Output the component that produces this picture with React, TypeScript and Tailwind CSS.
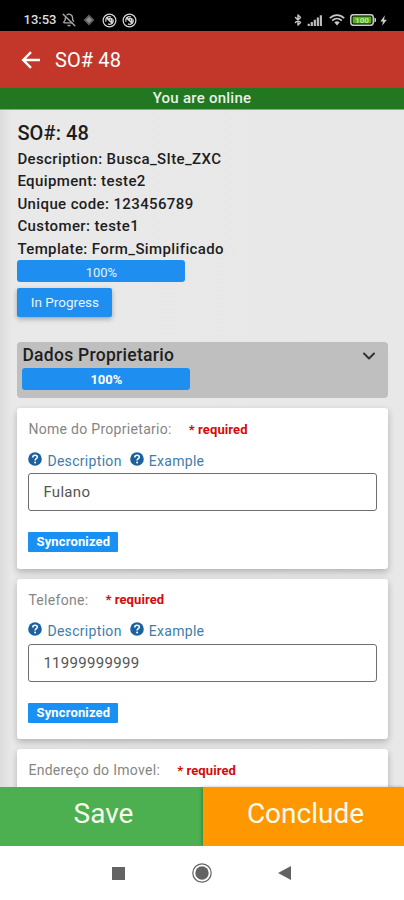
import { useState } from "react";
import { BellOff, Bluetooth, ChevronDown } from "lucide-react";

type Field = {
  id: string;
  label: string;
  value?: string;
};

const details = [
  "Description: Busca_SIte_ZXC",
  "Equipment: teste2",
  "Unique code: 123456789",
  "Customer: teste1",
  "Template: Form_Simplificado",
];

const initialFields: Field[] = [
  { id: "nome", label: "Nome do Proprietario:", value: "Fulano" },
  { id: "telefone", label: "Telefone:", value: "11999999999" },
  { id: "endereco", label: "Endereço do Imovel:" },
];

function AppBadgeIcon() {
  return (
    <svg viewBox="0 0 16 16" className="size-[15px]" fill="none" stroke="#d6d6d6">
      <circle cx="8" cy="8" r="6.8" strokeWidth="1.3" />
      <path d="M4.2 9.4A4 4 0 0 1 9.6 4.3M11.8 6.8a4 4 0 0 1-5.4 4.9" strokeWidth="1.4" />
      <path d="M4.6 5l6.6 6.2M7 6.2h3.4v3.2" strokeWidth="1.7" />
    </svg>
  );
}

function StatusBar() {
  return (
    <div className="flex h-[31px] shrink-0 items-center bg-black pt-[9px] pr-[17px] pl-[23.5px] text-[#dedede]">
      <span className="w-[38.5px] text-[13px] leading-4 font-medium">13:53</span>
      <BellOff className="size-[14px]" strokeWidth={2.4} color="#a8a8a8" />
      <svg viewBox="0 0 12 12" className="ml-[7px] size-3">
        <path d="M6 0.5L11.5 6 6 11.5 0.5 6z" fill="#5c5c5c" />
        <path d="M6 3L9 6 6 9 3 6z" fill="#8f8f8f" />
      </svg>
      <div className="ml-[7px] flex gap-[5px]">
        <AppBadgeIcon />
        <AppBadgeIcon />
      </div>
      <div className="ml-auto flex items-center">
        <Bluetooth className="h-[14px] w-3" strokeWidth={3} color="#c4c4c4" />
        <svg viewBox="0 0 16 12" className="ml-[3px] h-[11px] w-4" fill="#bdbdbd">
          <path d="M0 9.5h2.4V12H0zM3.3 7.5h2.4V12H3.3zM6.6 5.2H9V12H6.6zM9.9 2.8h2.4V12H9.9zM13.2 0.3h2.4V12h-2.4z" />
        </svg>
        <svg viewBox="0 0 16 12" className="ml-1.5 h-3 w-4" fill="none" stroke="#c9c9c9" strokeWidth="1.7">
          <path d="M0.8 4.2C5 0 11 0 15.2 4.2" />
          <path d="M3.2 6.7c2.8-2.8 6.8-2.8 9.6 0" />
          <path d="M5.3 8.3c1.6-1.5 3.8-1.5 5.4 0L8 11.6z" fill="#c9c9c9" stroke="none" />
        </svg>
        <svg viewBox="0 0 27 12" className="ml-[5px] h-3 w-[27px]">
          <rect x="0.8" y="0.8" width="22.4" height="10.4" rx="2.6" fill="none" stroke="#cfcfcf" strokeWidth="1.5" />
          <rect x="2.6" y="2.6" width="18.8" height="6.8" rx="0.8" fill="#55b01f" />
          <path d="M24.4 3.6l1.6 1v2.8l-1.6 1z" fill="#cfcfcf" />
          <text x="12" y="8.9" textAnchor="middle" fontSize="8" fontWeight="700" fill="#b9ee8c">
            100
          </text>
        </svg>
        <svg viewBox="0 0 8 12" className="ml-[3px] h-[11px] w-[7px]" fill="#d0d0d0">
          <path d="M5.6 0L0.4 7h3L2.4 12 7.8 5H4.6z" />
        </svg>
      </div>
    </div>
  );
}

function HelpLink({ text }: { text: string }) {
  return (
    <button type="button" className="flex text-[#3f7cab]">
      <svg viewBox="0 0 14 14" className="mr-[5px] size-[14px]">
        <circle cx="7" cy="7" r="6.8" fill="#1b61a0" />
        <path
          d="M4.8 5.4c0-3 4.6-2.8 4.5-0.2C9.2 6.7 7.1 6.7 7.1 8.5"
          fill="none"
          stroke="#fff"
          strokeWidth="1.6"
        />
        <circle cx="7.1" cy="10.6" r="1" fill="#fff" />
      </svg>
      <span className="text-[14px] leading-[18px] tracking-[0.31px]">{text}</span>
    </button>
  );
}

function FieldCard({ field, onChange }: { field: Field; onChange: (value: string) => void }) {
  return (
    <div className="h-[160.5px] shrink-0 rounded-[3px] bg-white px-[11px] pt-[11.5px] shadow-[0_3px_7px_rgba(0,0,0,0.24)]">
      <div className="flex h-5 items-center">
        <label htmlFor={field.id} className="text-[14px] tracking-[0.3px] text-[#858585]">
          {field.label}
        </label>
        <span className="ml-[17px] text-[13px] font-bold tracking-[0.1px] text-[#d50a0a]">* required</span>
      </div>
      {field.value !== undefined ? (
        <>
          <div className="mt-3 flex h-[21.5px] gap-2">
            <HelpLink text="Description" />
            <HelpLink text="Example" />
          </div>
          <input
            id={field.id}
            value={field.value}
            onChange={(event) => onChange(event.target.value)}
            className="block h-[38px] w-full rounded-[3px] border border-[#6e6e6e] bg-white px-[14px] text-[15px] tracking-[0.3px] text-[#555] outline-none focus:border-[#2196f3]"
          />
          <span className="mt-[21px] flex h-5 w-[90px] items-center justify-center rounded-[1px] bg-[#1991f4] text-[13px] font-bold tracking-[0.15px] text-white">
            Syncronized
          </span>
        </>
      ) : null}
    </div>
  );
}

export default function App() {
  const [fields, setFields] = useState(initialFields);

  const updateField = (id: string, value: string) => {
    setFields((current) => current.map((field) => (field.id === id ? { ...field, value } : field)));
  };

  return (
    <div className="flex h-[900px] w-[404px] flex-col overflow-hidden bg-[#e8e8e8] font-[Roboto,sans-serif]">
      <StatusBar />

      <header className="flex h-[57px] shrink-0 items-center bg-[#c3372b] pl-[21px] text-white">
        <svg viewBox="0 0 20 18" className="h-[18px] w-5" fill="none" stroke="#fff" strokeWidth="2.4">
          <path d="M19 9H2.4M10 1.2L2.2 9l7.8 7.8" />
        </svg>
        <h1 className="ml-[14px] text-[20px] tracking-[0.1px]">SO# 48</h1>
      </header>

      <div className="flex h-[22px] shrink-0 items-center justify-center border-b border-[#75b573] bg-[#217821] text-[15px] font-medium tracking-[0.25px] text-[#e6f2e6]">
        You are online
      </div>

      <main className="flex min-h-0 flex-1 flex-col overflow-hidden bg-linear-to-r from-[#dcdcdc] via-[#e9e9e9] via-3% to-[#e8e8e8] pt-[11px] pr-4 pl-[17.4px]">
        <h2 className="text-[20px] leading-6 font-medium tracking-[0.1px] text-[#1c1c1c]">SO#: 48</h2>
        <div className="mt-[2.5px] text-[15px] leading-[22.5px] font-medium tracking-[0.38px] text-[#1e1e1e]">
          {details.map((line) => (
            <p key={line}>{line}</p>
          ))}
        </div>

        <div className="flex h-[22px] w-[168px] shrink-0 items-center justify-center rounded-[3px] bg-[#1e8ff0] pt-[3px] text-[13px] text-[#e4f2ff]">
          100%
        </div>
        <button
          type="button"
          className="mt-1.5 h-[29px] w-[95px] shrink-0 rounded-[2px] bg-[#1e8ff0] text-[13.5px] text-[#e9f4ff] shadow-[0_2px_5px_rgba(0,0,0,0.3)]"
        >
          In Progress
        </button>

        <section className="mt-[24.5px] flex h-[56px] shrink-0 justify-between rounded-[4px] bg-[#bfbfbf] px-[5px]">
          <div>
            <h3 className="pt-px text-[17.5px] leading-6 font-medium tracking-[0.28px] text-[#1e1e1e]">
              Dados Proprietario
            </h3>
            <div className="mt-px flex h-[22px] w-[168px] items-center justify-center rounded-[3px] bg-[#1e8ff0] pt-[3px] text-[13px] font-bold text-white">
              100%
            </div>
          </div>
          <ChevronDown className="mt-1 mr-1 size-5" strokeWidth={2.4} color="#333" />
        </section>

        <div className="mt-[10.5px] flex flex-col gap-[10.2px]">
          {fields.map((field) => (
            <FieldCard key={field.id} field={field} onChange={(value) => updateField(field.id, value)} />
          ))}
        </div>
      </main>

      <div className="flex h-[59px] shrink-0 text-[28px] text-[#f6fbee]">
        <button type="button" className="w-[203px] bg-[#4caf50] pb-1.5 pl-1">
          Save
        </button>
        <button type="button" className="flex-1 bg-[#ff9800] pb-1.5 pl-1 shadow-[-1px_0_3px_rgba(0,0,0,0.25)]">
          Conclude
        </button>
      </div>

      <nav className="flex h-[54px] shrink-0 items-center bg-white pl-[112px]">
        <span className="size-[13px] bg-[#636363]" />
        <svg viewBox="0 0 20 20" className="ml-[67px] size-5">
          <circle cx="10" cy="10" r="9.2" fill="none" stroke="#636363" strokeWidth="1.2" />
          <circle cx="10" cy="10" r="6.7" fill="#636363" />
        </svg>
        <svg viewBox="0 0 13 14" className="ml-[66px] h-[14px] w-[13px]" fill="#636363">
          <path d="M13 0v14L0 7z" />
        </svg>
      </nav>
    </div>
  );
}
